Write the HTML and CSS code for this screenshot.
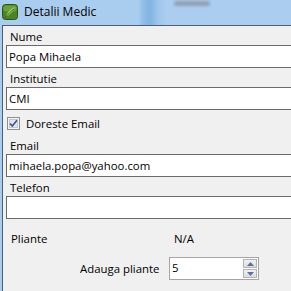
FILE: index.html
```html
<!DOCTYPE html>
<html lang="ro">

<head>
    <meta charset="UTF-8">
    <title>Detalii Medic</title>
    <link rel="stylesheet" href="styles.css">
</head>

<body>
    <div class="window">
        <!-- bara de titlu -->
        <div class="titlebar">
            <svg class="app-icon" width="16" height="16" viewBox="0 0 16 16">
                <rect x="0.5" y="0.5" width="15" height="15" rx="3" fill="#4a8426" stroke="#2c5514"/>
                <rect x="1.5" y="1.5" width="13" height="6" rx="2" fill="#78ae45" opacity="0.7"/>
                <path d="M4 13 C5 8 8 5 13 3 C11 7 9 10 4 13 Z" fill="#9fce63"/>
                <path d="M3 14 C6 10 9 7 12 5" stroke="#2c5514" stroke-width="0.8" fill="none"/>
            </svg>
            <span class="title">Detalii Medic</span>
            <div class="glass-blur"></div>
        </div>

        <!-- continut -->
        <div class="client">
            <label class="field-label">Nume</label>
            <div class="textbox">Popa Mihaela</div>

            <label class="field-label">Institutie</label>
            <div class="textbox">CMI</div>

            <div class="check-row">
                <svg class="checkbox" width="13" height="13" viewBox="0 0 13 13">
                    <rect x="0.5" y="0.5" width="12" height="12" fill="#f4f4f4" stroke="#8f8f8f"/>
                    <rect x="2.5" y="2.5" width="8" height="8" fill="#e2e5ea" stroke="#c4c8d0"/>
                    <path d="M3 6.5 L5.3 9 L10 3.2" stroke="#3c4fa0" stroke-width="1.6" fill="none"/>
                </svg>
                <span>Doreste Email</span>
            </div>

            <label class="field-label">Email</label>
            <div class="textbox">mihaela.popa@yahoo.com</div>

            <label class="field-label">Telefon</label>
            <div class="textbox"></div>

            <div class="info-row">
                <span class="info-label">Pliante</span>
                <span class="info-value">N/A</span>
            </div>

            <div class="spin-row">
                <span class="spin-label">Adauga pliante</span>
                <div class="spinbox">
                    <span class="spin-value">5</span>
                    <div class="spin-buttons">
                        <div class="spin-btn">
                            <svg width="7" height="4" viewBox="0 0 7 4"><path d="M0 4 L3.5 0 L7 4 Z" fill="#5b6fa8"/></svg>
                        </div>
                        <div class="spin-btn">
                            <svg width="7" height="4" viewBox="0 0 7 4"><path d="M0 0 L3.5 4 L7 0 Z" fill="#5b6fa8"/></svg>
                        </div>
                    </div>
                </div>
            </div>
        </div>
    </div>
</body>

</html>
```

FILE: styles.css
```css
/* setari generale */
body {
    margin: 0;
    padding: 0;
    width: 291px;
    height: 291px;
    overflow: hidden;
    font-family: "Open Sans", Arial, sans-serif;
    font-size: 11.4px;
    color: #000;
    background-color: #f0f0f0;
}

.window {
    display: flex;
    flex-direction: column;
    height: 291px;
    overflow: hidden;
    background: linear-gradient(90deg, #a9cdef 0, #a9cdef 138px, #8dbce5 144px, #80b4e2 150px, #9cc6ec 158px, #aacdf0 166px, #aacdf0 100%);
}

/* bara de titlu */
.titlebar {
    position: relative;
    height: 25px;
    display: flex;
    align-items: center;
    padding-left: 2px;
    flex-shrink: 0;
}

.app-icon {
    margin-top: -2px;
}

.title {
    margin-left: 6px;
    margin-top: -3px;
    font-size: 12px;
    color: #000;
}

.glass-blur {
    position: absolute;
    left: 174px;
    top: 1px;
    width: 36px;
    height: 5px;
    border-radius: 3px;
    background: #8a95a4;
    filter: blur(1.5px);
    opacity: 0.8;
}

/* continut */
.client {
    flex: 1;
    margin-left: 2px;
    border-left: 1px solid #4b5f78;
    border-top: 1px solid #4b5f78;
    background-color: #f0f0f0;
    padding: 3px 0 0 3px;
    display: flex;
    flex-direction: column;
    overflow: hidden;
}

.field-label {
    height: 16px;
    line-height: 15px;
    padding-left: 4px;
    margin-top: 3px;
}

.field-label:first-child {
    margin-top: 0;
}

.textbox {
    flex-shrink: 0;
    width: 320px;
    height: 21px;
    line-height: 21px;
    border: 1px solid #6b6b6b;
    background-color: #fff;
    padding-left: 2px;
    white-space: nowrap;
}

.check-row {
    height: 25px;
    display: flex;
    align-items: flex-start;
    gap: 6px;
    padding: 7px 0 0 1px;
    box-sizing: border-box;
    line-height: 13px;
}

.info-row {
    display: flex;
    height: 16px;
    line-height: 16px;
    margin-top: 12px;
    padding-left: 5px;
}

.info-label {
    width: 163px;
}

.spin-row {
    display: flex;
    align-items: center;
    margin-top: 10px;
    padding-left: 74px;
}

.spin-label {
    width: 89px;
}

.spinbox {
    width: 88px;
    height: 21px;
    border: 1px solid #a5a5a5;
    background-color: #fff;
    display: flex;
    justify-content: space-between;
}

.spin-value {
    line-height: 20px;
    padding-left: 2px;
}

.spin-buttons {
    display: flex;
    flex-direction: column;
    gap: 1px;
    padding: 1px 1px 1px 0;
}

.spin-btn {
    width: 12px;
    height: 8px;
    border: 1px solid #b4b4b4;
    background: linear-gradient(#f2f2f2, #dcdcdc);
    display: flex;
    align-items: center;
    justify-content: center;
}
```
